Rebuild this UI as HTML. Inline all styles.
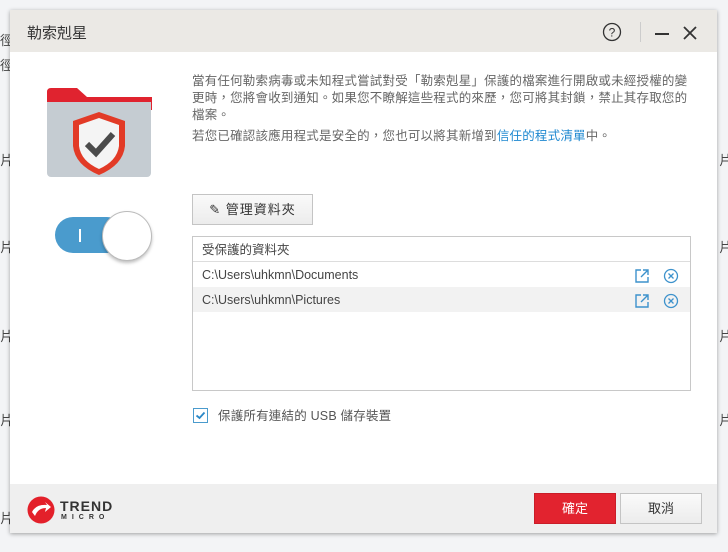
<!DOCTYPE html>
<html><head><meta charset="utf-8"><style>
*{margin:0;padding:0;box-sizing:border-box}
body{width:728px;height:552px;background:#f3f4f6;position:relative;overflow:hidden;font-family:"Liberation Sans","Noto Sans CJK TC",sans-serif;color:#555}
.bgc{position:absolute;font-size:13px;color:#444}
.dlg{position:absolute;left:10px;top:10px;width:707px;height:523px;background:#fff;box-shadow:0 1px 4px rgba(0,0,0,.35)}
.title{position:absolute;left:0;top:0;width:100%;height:42px;background:#ebe9e5;font-size:15px;color:#333;padding:12px 17px}
.txt{position:absolute;left:182px;font-size:12.5px;line-height:17px;color:#666;letter-spacing:0.2px;white-space:nowrap}
.footer{position:absolute;left:0;top:474px;width:100%;height:49px;background:#efefef}
.btn{position:absolute;font-size:13px;text-align:center}
.list{position:absolute;left:182px;top:226px;width:499px;height:155px;border:1px solid #c8c8c8}
.row{height:25px;line-height:27px;padding-left:9px;font-size:12.5px;color:#444;position:relative}
</style></head><body>
<div class="bgc" style="left:0;top:30px">徑</div>
<div class="bgc" style="left:0;top:55px">徑</div>
<div class="bgc" style="left:0;top:150px">片</div>
<div class="bgc" style="left:0;top:237px">片</div>
<div class="bgc" style="left:0;top:326px">片</div>
<div class="bgc" style="left:0;top:410px">片</div>
<div class="bgc" style="left:0;top:508px">片</div>
<div class="bgc" style="left:719px;top:150px">片</div>
<div class="bgc" style="left:719px;top:237px">片</div>
<div class="bgc" style="left:719px;top:326px">片</div>
<div class="bgc" style="left:719px;top:410px">片</div>
<div class="dlg">
<div class="title">勒索剋星</div>
<svg style="position:absolute;left:592px;top:12px" width="20" height="20"><circle cx="10" cy="10" r="8.5" fill="none" stroke="#333" stroke-width="1.3"/><text x="10" y="14.5" font-size="12" text-anchor="middle" fill="#333" font-family="Liberation Sans">?</text></svg>
<div style="position:absolute;left:630px;top:12px;width:1px;height:20px;background:#ccc"></div>
<div style="position:absolute;left:645px;top:23px;width:14px;height:2px;background:#333"></div>
<svg style="position:absolute;left:673px;top:16px" width="14" height="14"><path d="M1 1L13 13M13 1L1 13" stroke="#333" stroke-width="1.8"/></svg>
<svg style="position:absolute;left:37px;top:78px" width="105" height="90" viewBox="0 0 105 90">
<path d="M0 4Q0 0 4 0H30L40 9H105V22H0Z" fill="#e0232f"/>
<rect x="0" y="9" width="104" height="80" rx="4" fill="#c5ccd2"/>
<rect x="0" y="9" width="104" height="5" fill="#e0232f"/>
<path d="M52 24L78 33V58Q76 77 52 87Q28 77 26 58V33Z" fill="#e23a26"/>
<path d="M52 30L72 37V58Q70 73 52 81Q34 73 32 58V37Z" fill="#f4f4f4"/>
<path d="M40 56L49 65L66 46" fill="none" stroke="#4b4b4b" stroke-width="6"/>
</svg>
<div style="position:absolute;left:45px;top:207px;width:70px;height:36px;border-radius:18px;background:#4a9bcd"></div>
<div style="position:absolute;left:69px;top:219px;width:2px;height:13px;background:#fff"></div>
<div style="position:absolute;left:92px;top:201px;width:50px;height:50px;border-radius:50%;background:#fff;border:1px solid #bbb;box-shadow:0 2px 3px rgba(0,0,0,.25)"></div>
<div class="txt" style="top:63px">當有任何勒索病毒或未知程式嘗試對受「勒索剋星」保護的檔案進行開啟或未經授權的變<br>更時，您將會收到通知。如果您不瞭解這些程式的來歷，您可將其封鎖，禁止其存取您的<br>檔案。</div>
<div class="txt" style="top:118px">若您已確認該應用程式是安全的，您也可以將其新增到<span style="color:#1e88d0">信任的程式清單</span>中。</div>
<div class="btn" style="left:182px;top:184px;width:121px;height:31px;border:1px solid #c4c4c4;background:linear-gradient(#fafafa,#ececec);line-height:29px;color:#333;letter-spacing:1px">✎ 管理資料夾</div>
<div class="list">
<div class="row" style="border-bottom:1px solid #ddd">受保護的資料夾</div>
<div class="row">C:\Users\uhkmn\Documents</div>
<div class="row" style="background:#f2f2f2">C:\Users\uhkmn\Pictures</div>
</div>
<svg style="position:absolute;left:625px;top:259px" width="14" height="14"><path d="M6 1H1V13H13V8M8 1H13V6M13 1L6 8" fill="none" stroke="#3d92cc" stroke-width="1.4"/></svg>
<svg style="position:absolute;left:625px;top:284px" width="14" height="14"><path d="M6 1H1V13H13V8M8 1H13V6M13 1L6 8" fill="none" stroke="#3d92cc" stroke-width="1.4"/></svg>
<svg style="position:absolute;left:653px;top:258px" width="16" height="16"><circle cx="8" cy="8" r="6.5" fill="none" stroke="#3d92cc" stroke-width="1.3"/><path d="M5.5 5.5L10.5 10.5M10.5 5.5L5.5 10.5" stroke="#3d92cc" stroke-width="1.3"/></svg>
<svg style="position:absolute;left:653px;top:283px" width="16" height="16"><circle cx="8" cy="8" r="6.5" fill="none" stroke="#3d92cc" stroke-width="1.3"/><path d="M5.5 5.5L10.5 10.5M10.5 5.5L5.5 10.5" stroke="#3d92cc" stroke-width="1.3"/></svg>
<svg style="position:absolute;left:183px;top:398px" width="15" height="15"><rect x="0.5" y="0.5" width="14" height="14" fill="#fff" stroke="#4a9bcd"/><path d="M3.5 7.5L6.5 10L11.5 4.5" fill="none" stroke="#2a88c8" stroke-width="1.8"/></svg>
<div class="txt" style="top:398px;left:208px;color:#555">保護所有連結的 USB 儲存裝置</div>
<div class="footer">
<svg style="position:absolute;left:17px;top:12px" width="28" height="28"><circle cx="14" cy="14" r="13.5" fill="#e3202a"/><path d="M5 16Q9 8 20 9L18 6L24 11L18 16L19 12Q11 12 8 20Z" fill="#fff"/></svg>
<div style="position:absolute;left:50px;top:14px;font-weight:bold;font-size:14px;color:#333;letter-spacing:1px;font-family:'Liberation Sans'">TREND</div>
<div style="position:absolute;left:51px;top:30px;font-weight:bold;font-size:7px;color:#333;letter-spacing:5px;font-family:'Liberation Sans'">MICRO</div>
<div class="btn" style="left:524px;top:9px;width:82px;height:31px;background:#e2232f;border:1px solid #c91d28;color:#fff;line-height:29px">確定</div>
<div class="btn" style="left:610px;top:9px;width:82px;height:31px;background:linear-gradient(#fafafa,#ececec);border:1px solid #c4c4c4;color:#333;line-height:29px">取消</div>
</div>
</div>
</body></html>
